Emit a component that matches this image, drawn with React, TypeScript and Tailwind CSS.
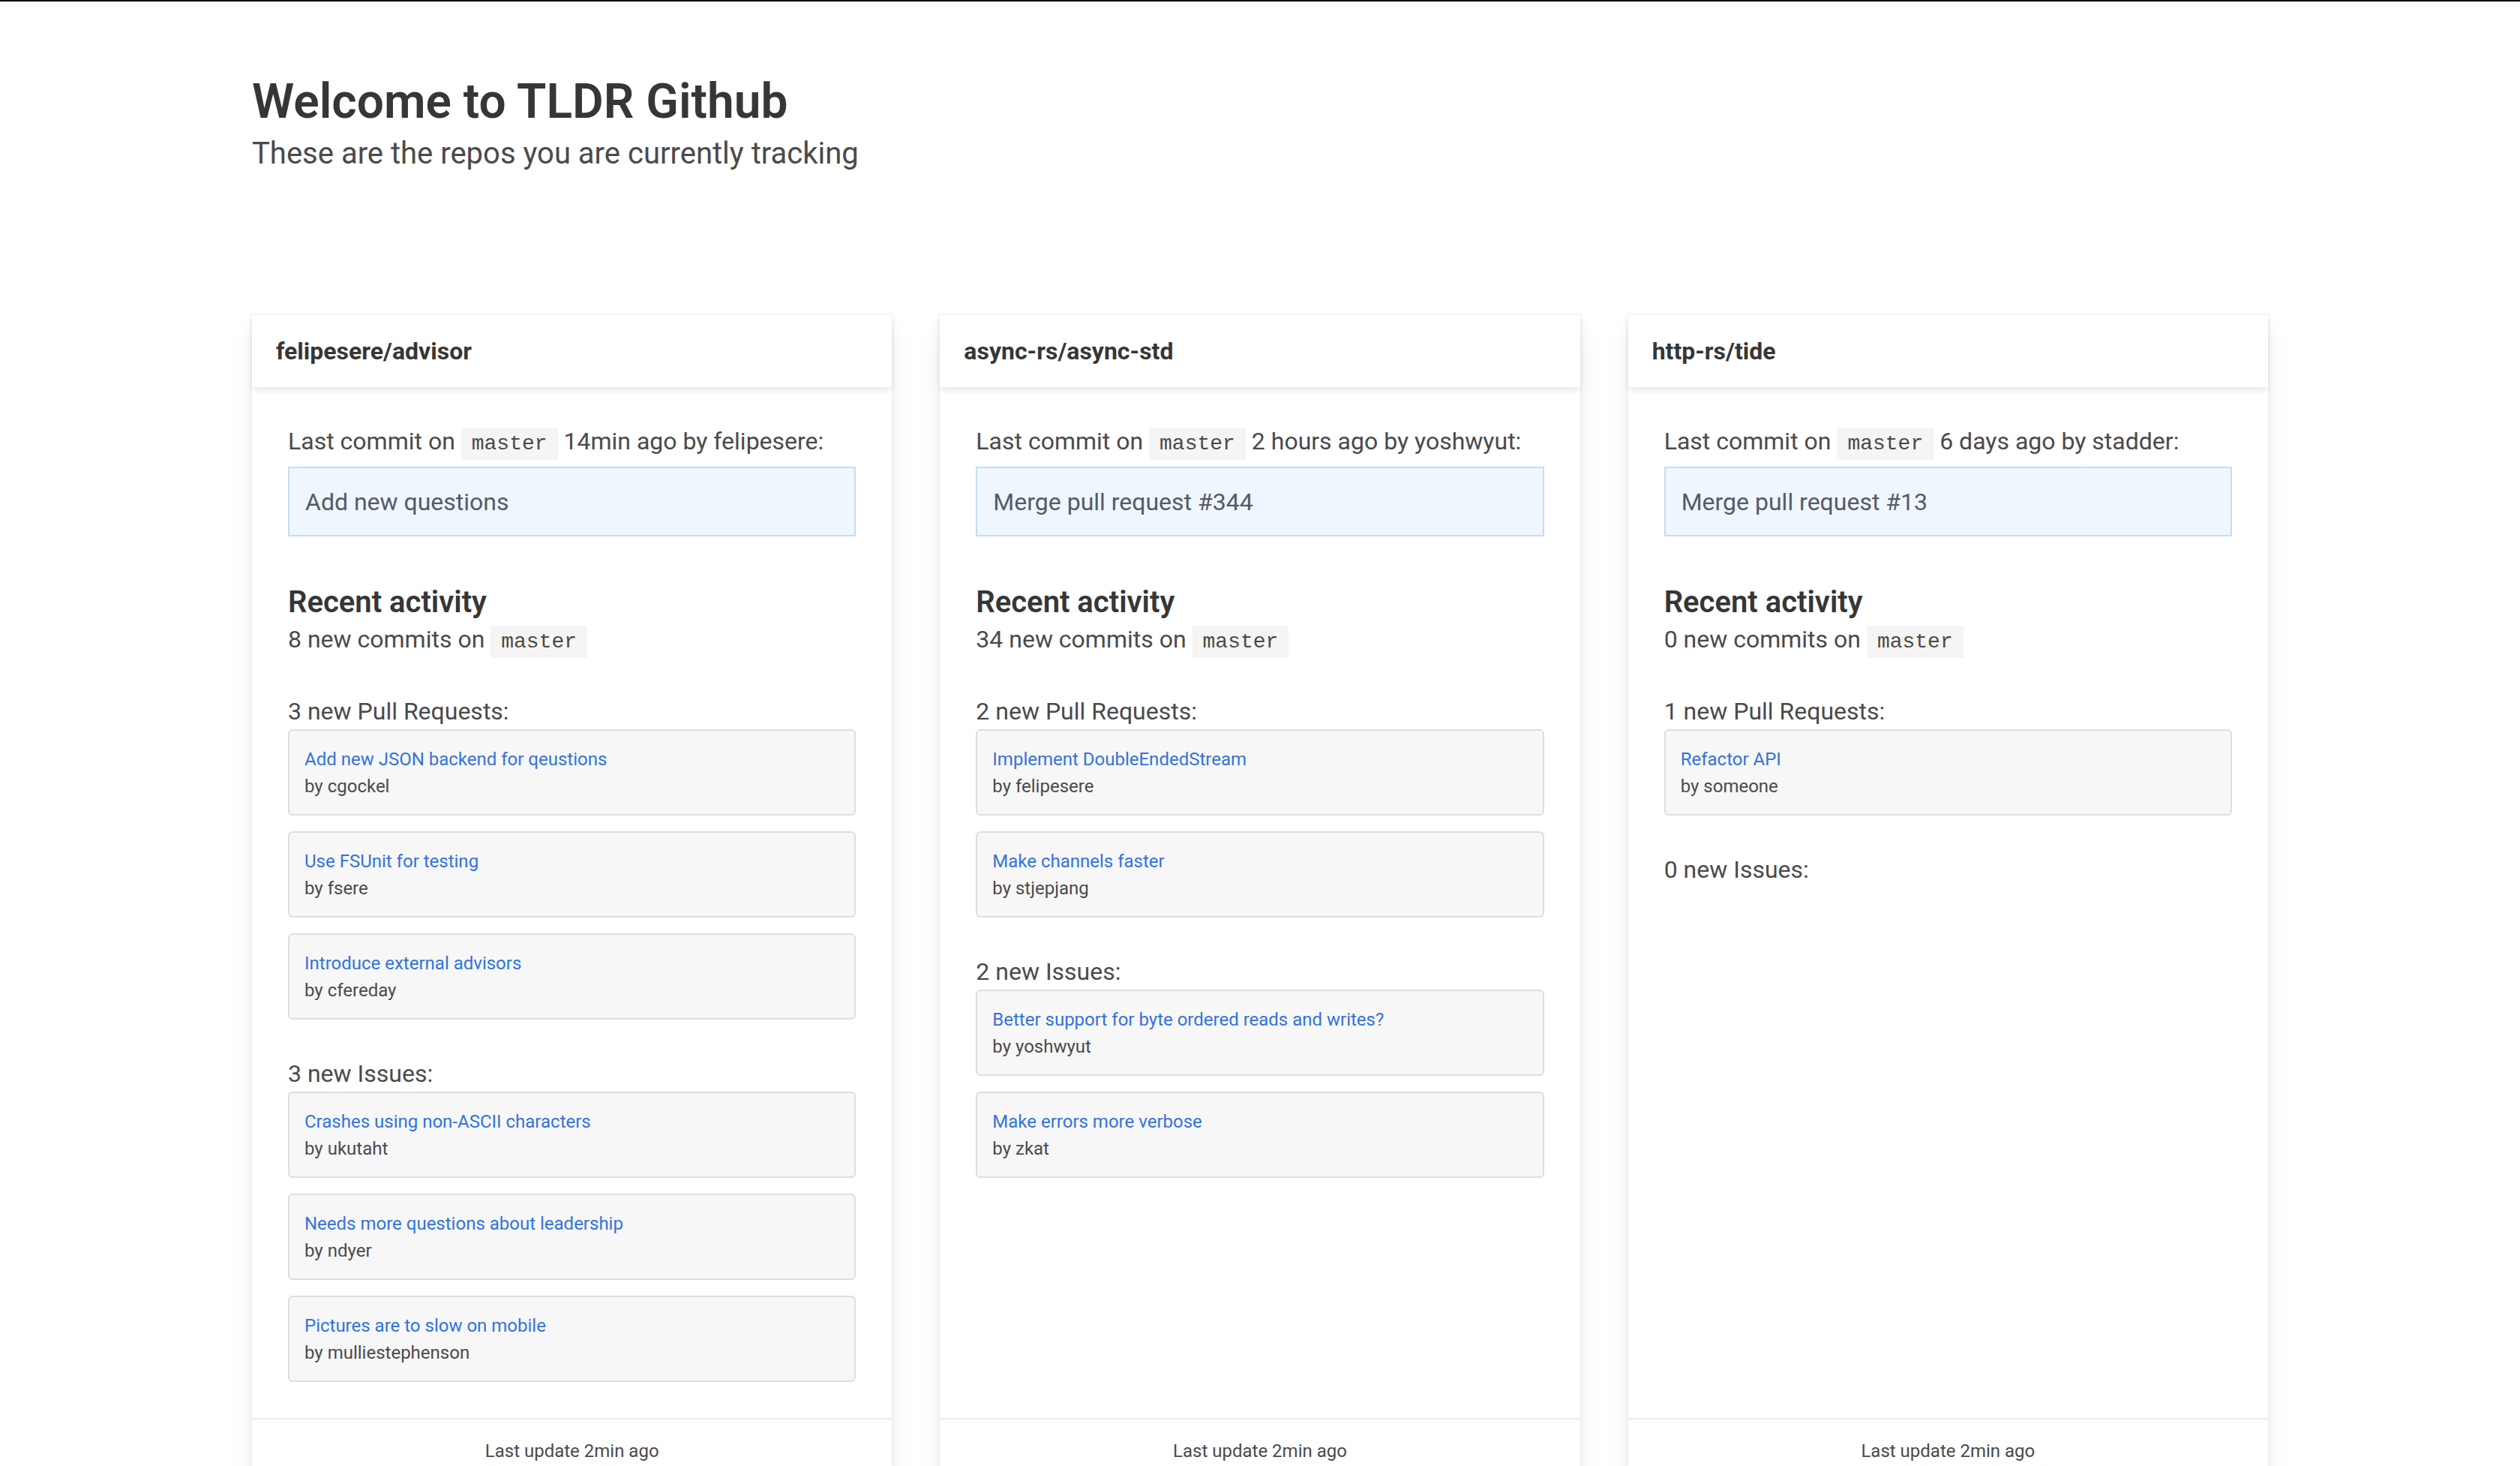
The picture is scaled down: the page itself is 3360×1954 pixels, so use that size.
type Item = { title: string; author: string };

type Repo = {
  name: string;
  ago: string;
  by: string;
  message: string;
  commits: number;
  pulls: Item[];
  issues: Item[];
};

const repos: Repo[] = [
  {
    name: 'felipesere/advisor',
    ago: '14min ago',
    by: 'felipesere',
    message: 'Add new questions',
    commits: 8,
    pulls: [
      { title: 'Add new JSON backend for qeustions', author: 'cgockel' },
      { title: 'Use FSUnit for testing', author: 'fsere' },
      { title: 'Introduce external advisors', author: 'cfereday' },
    ],
    issues: [
      { title: 'Crashes using non-ASCII characters', author: 'ukutaht' },
      { title: 'Needs more questions about leadership', author: 'ndyer' },
      { title: 'Pictures are to slow on mobile', author: 'mulliestephenson' },
    ],
  },
  {
    name: 'async-rs/async-std',
    ago: '2 hours ago',
    by: 'yoshwyut',
    message: 'Merge pull request #344',
    commits: 34,
    pulls: [
      { title: 'Implement DoubleEndedStream', author: 'felipesere' },
      { title: 'Make channels faster', author: 'stjepjang' },
    ],
    issues: [
      { title: 'Better support for byte ordered reads and writes?', author: 'yoshwyut' },
      { title: 'Make errors more verbose', author: 'zkat' },
    ],
  },
  {
    name: 'http-rs/tide',
    ago: '6 days ago',
    by: 'stadder',
    message: 'Merge pull request #13',
    commits: 0,
    pulls: [{ title: 'Refactor API', author: 'someone' }],
    issues: [],
  },
];

function Code({ children }: { children: string }) {
  return (
    <code className="bg-[#f5f5f5] px-[14px] py-[6px] text-[28px] leading-none text-[#4a4a42] font-['Liberation_Mono',monospace]">
      {children}
    </code>
  );
}

function ItemList({ items }: { items: Item[] }) {
  return (
    <div className="flex flex-col gap-[21px]">
      {items.map((item) => (
        <div
          key={item.title}
          className="rounded-[6px] border-2 border-[#dedede] bg-[#f7f7f7] px-[20px] pt-[20px] pb-[19px] text-[24px] leading-[36px]"
        >
          <a href="#" className="block text-[#3273dc]">
            {item.title}
          </a>
          <div className="text-[#4a4a4a]">by {item.author}</div>
        </div>
      ))}
    </div>
  );
}

function RepoCard({ repo }: { repo: Repo }) {
  return (
    <div className="flex flex-col bg-white shadow-[0_16px_32px_-4px_rgba(10,10,10,0.1),0_0_0_2px_rgba(10,10,10,0.02)]">
      {/* Header */}
      <div className="px-[32px] py-[24px] text-[32px] font-bold leading-[48px] text-[#363636] shadow-[0_4px_8px_rgba(10,10,10,0.1)]">
        {repo.name}
      </div>

      {/* Content */}
      <div className="flex-1 p-[48px] text-[32px] leading-[48px] text-[#4a4a4a]">
        <p>
          Last commit on <Code>master</Code> {repo.ago} by {repo.by}:
        </p>
        <div className="mt-[10px] border-2 border-[#c3ddf5] bg-[#eff6fe] px-[21px] pt-[21px] pb-[20px] text-[#525c66]">
          {repo.message}
        </div>

        <h2 className="mt-[63px] text-[40px] font-semibold leading-[50px] text-[#363636]">Recent activity</h2>
        <p>
          {repo.commits} new commits on <Code>master</Code>
        </p>

        <p className="mt-[48px]">{repo.pulls.length} new Pull Requests:</p>
        <ItemList items={repo.pulls} />

        <p className="mt-[48px]">{repo.issues.length} new Issues:</p>
        <ItemList items={repo.issues} />
      </div>

      {/* Footer */}
      <div className="border-t-2 border-[#ededed] py-[24px] text-center text-[24px] leading-[36px] text-[#4a4a4a]">
        Last update 2min ago
      </div>
    </div>
  );
}

export default function App() {
  return (
    <div className="min-h-screen bg-white font-['Roboto','Noto_Sans',sans-serif] antialiased">
      <div className="h-[2px] bg-black" />

      <div className="mx-auto w-[2688px] pt-[98px] pb-[96px]">
        <h1 className="text-[64px] font-semibold leading-[72px] text-[#363636]">Welcome to TLDR Github</h1>
        <p className="mt-[8px] text-[40px] leading-[50px] text-[#4a4a4a]">These are the repos you are currently tracking</p>

        <div className="mt-[190px] grid grid-cols-3 gap-[64px]">
          {repos.map((repo) => (
            <RepoCard key={repo.name} repo={repo} />
          ))}
        </div>
      </div>
    </div>
  );
}
